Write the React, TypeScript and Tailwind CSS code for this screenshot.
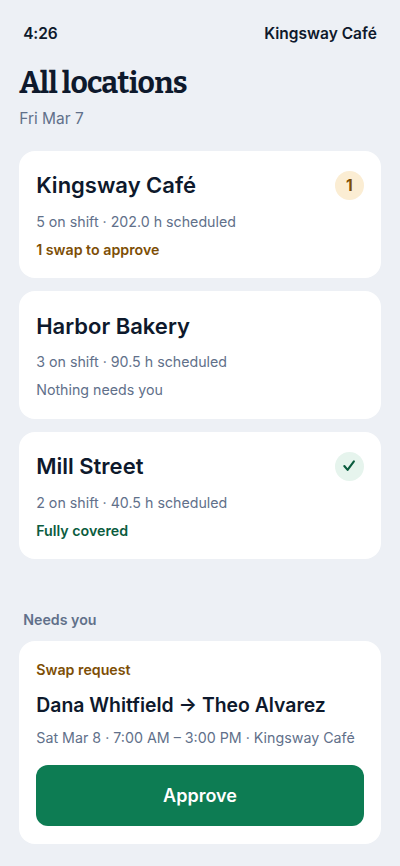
import React from "react";

type Location = { name: string; detail: string; status: string; tone: "warn" | "quiet" | "ok" };

const locations: Location[] = [
  { name: "Kingsway Café", detail: "5 on shift · 202.0 h scheduled", status: "1 swap to approve", tone: "warn" },
  { name: "Harbor Bakery", detail: "3 on shift · 90.5 h scheduled", status: "Nothing needs you", tone: "quiet" },
  { name: "Mill Street", detail: "2 on shift · 40.5 h scheduled", status: "Fully covered", tone: "ok" },
];

const toneClass = {
  warn: "font-semibold text-[#7d4e05]",
  quiet: "text-[#61708a]",
  ok: "font-semibold text-[#0b5c3e]",
};

function Badge({ tone }: { tone: Location["tone"] }) {
  if (tone === "warn")
    return <span className="flex size-[28.6px] items-center justify-center rounded-full bg-[#fbedd3] text-[15.5px] font-bold text-[#7d4e05]">1</span>;
  if (tone === "ok")
    return (
      <span className="flex size-[28.6px] items-center justify-center rounded-full bg-[#e6f4ed]">
        <svg width="14" height="14" viewBox="0 0 14 14" fill="none" stroke="#0b5c3e" strokeWidth="2.1" strokeLinecap="round" strokeLinejoin="round">
          <path d="M2.3 7 5.6 10.9 11.9 2.3" />
        </svg>
      </span>
    );
  return null;
}

function LocationCard({ name, detail, status, tone }: Location) {
  return (
    <article className="h-[127.5px] rounded-[16px] bg-white pt-[20.5px] pr-[17.3px] pl-[17px]">
      <div className="flex h-[29px] items-start justify-between">
        <h2 className="text-[22px] leading-[29px] font-semibold">{name}</h2>
        <Badge tone={tone} />
      </div>
      <p className="mt-[11.7px] text-[14.22px] leading-[20px] text-[#61708a]">{detail}</p>
      <p className={`mt-[8px] text-[14.22px] leading-[20px] ${toneClass[tone]}`}>{status}</p>
    </article>
  );
}

export default function App() {
  return (
    <main className="h-[866px] w-[400px] overflow-hidden bg-[#edf0f5] px-[19.2px] font-['Inter',sans-serif] whitespace-nowrap text-[#0e192c]">
      <div className="flex justify-between px-[4px] pt-[24px] text-[15.5px] leading-[20px] font-semibold">
        <span className="tracking-[-0.15px]">4:26</span>
        <span>Kingsway Café</span>
      </div>
      <h1 className="mt-[19px] font-['Bitter','Noto_Serif','DejaVu_Serif',serif] text-[30px] leading-[40px] font-bold tracking-[-0.68px]">All locations</h1>
      <p className="mt-[6px] text-[15.5px] leading-[20px] text-[#61708a]">Fri Mar 7</p>
      <section className="mt-[21.6px] flex flex-col gap-[13px]">
        {locations.map((l) => <LocationCard key={l.name} {...l} />)}
      </section>
      <h3 className="mt-[51px] px-[4px] text-[14.22px] leading-[20px] font-semibold text-[#61708a]">Needs you</h3>
      <section className="mt-[11px] h-[202.6px] rounded-[16px] bg-white px-[17.1px] pt-[19px]">
        <p className="text-[14.22px] leading-[20px] font-semibold text-[#7d4e05]">Swap request</p>
        <p className="mt-[11.5px] text-[19.4px] leading-[26px] font-semibold">Dana Whitfield → Theo Alvarez</p>
        <p className="mt-[10px] text-[14.26px] leading-[20px] text-[#61708a]">Sat Mar 8 · 7:00 AM – 3:00 PM · Kingsway Café</p>
        <button className="mt-[17.5px] block h-[60.6px] w-full rounded-[12px] bg-[#0d7c53] text-[18px] font-semibold text-white">Approve</button>
      </section>
    </main>
  );
}
